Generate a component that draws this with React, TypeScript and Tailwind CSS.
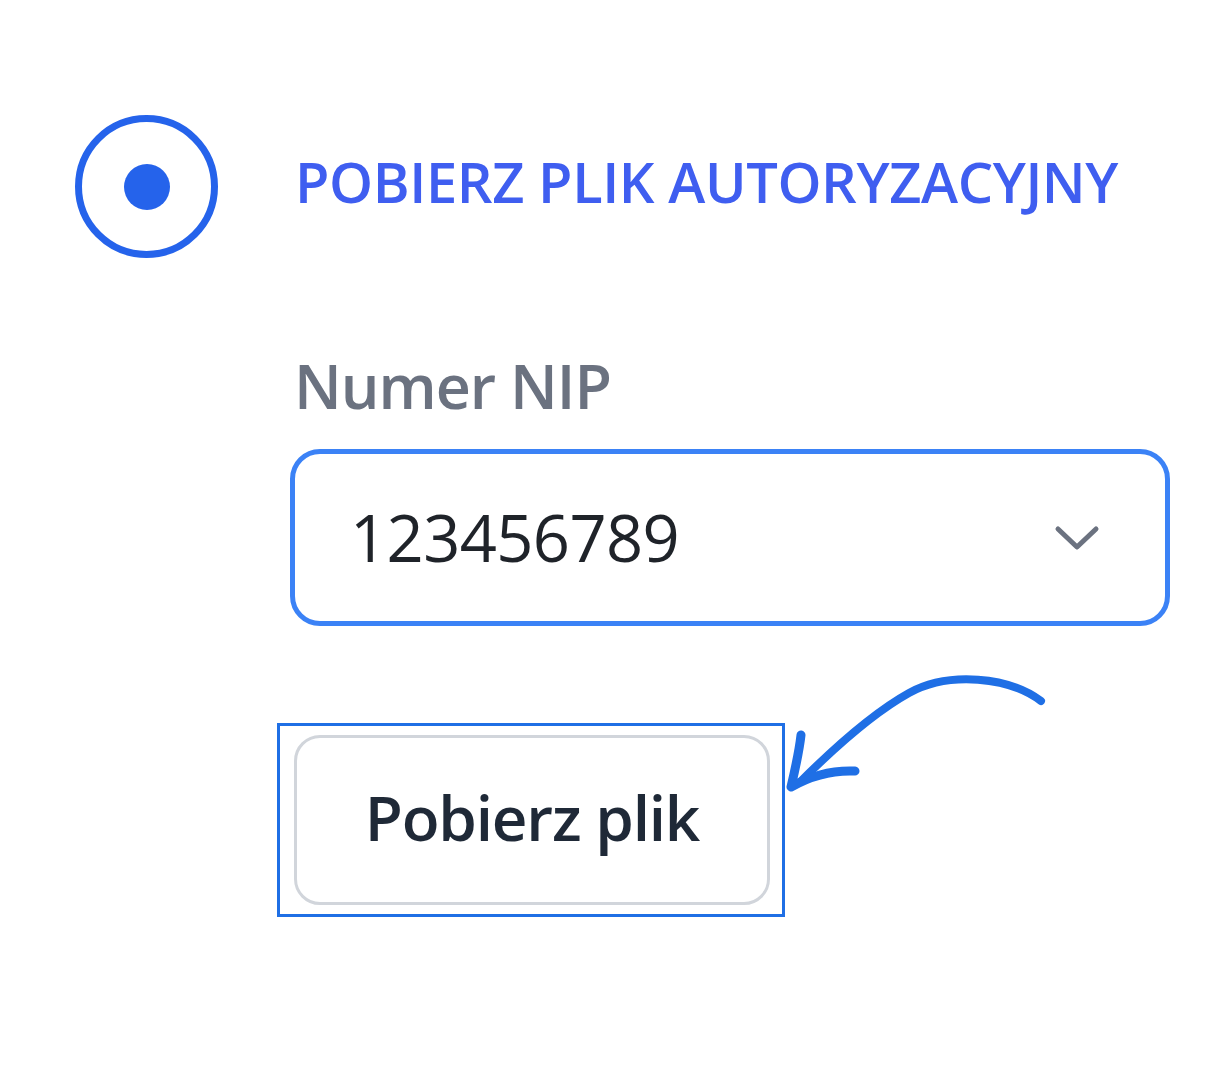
import React from "react";

function CurvedArrow() {
  return (
    <svg
      className="absolute left-[500px] top-[-48px]"
      width="280"
      height="130"
      viewBox="0 0 280 130"
      fill="none"
    >
      {/* hand-drawn arrow pointing at the button */}
      <path
        d="M264 26 C232 2 172 -4 132 18 C96 38 60 70 22 108"
        stroke="#1f6fe5"
        strokeWidth="8"
        strokeLinecap="round"
      />
      <path
        d="M24 60 C22 78 18 95 14 112 C35 100 55 95 78 96"
        stroke="#1f6fe5"
        strokeWidth="9"
        strokeLinecap="round"
        strokeLinejoin="round"
      />
    </svg>
  );
}

export default function App() {
  return (
    <div
      className="relative h-[1080px] w-[1208px] bg-white"
      style={{ fontFamily: '"Open Sans", "Noto Sans", sans-serif' }}
    >
      {/* Radio + heading */}
      <div className="flex items-center pl-[75px] pt-[115px]">
        <div className="flex h-[143px] w-[143px] items-center justify-center rounded-full border-[7px] border-[#2563eb]">
          <div className="h-[46px] w-[46px] rounded-full bg-[#2563eb]" />
        </div>
        <span className="ml-[77px] mb-[12px] text-[56px] font-semibold tracking-[-0.4px] text-[#3f5ef0]">
          POBIERZ PLIK AUTORYZACYJNY
        </span>
      </div>

      <div className="pl-[290px]">
        {/* Label */}
        <div className="mt-[92px] pl-[4px] text-[61px] font-semibold leading-[72px] tracking-[-1px] text-[#6b7280]">
          Numer NIP
        </div>

        {/* Select */}
        <div className="mt-[27px] flex h-[177px] w-[880px] items-center justify-between rounded-[30px] border-[5px] border-[#3b82f6] pl-[55px] pr-[65px]">
          <span className="text-[65px] tracking-[-0.6px] text-[#1f2329]">123456789</span>
          <svg width="46" height="28" viewBox="0 0 46 28" fill="none">
            <path
              d="M4 5 L23 23 L42 5"
              stroke="#6b7280"
              strokeWidth="5"
              strokeLinecap="round"
              strokeLinejoin="round"
            />
          </svg>
        </div>

        {/* Button with highlight */}
        <div className="relative ml-[-13px] mt-[97px] w-[508px]">
          <div className="border-[3px] border-[#1f6fe5] px-[14px] py-[9px]">
            <button className="flex h-[170px] w-[476px] items-center justify-center rounded-[26px] border-[3px] border-[#d1d5db] bg-white">
              <span className="mb-[6px] text-[62px] font-semibold tracking-[-1.2px] text-[#1f2937]">
                Pobierz plik
              </span>
            </button>
          </div>
          <CurvedArrow />
        </div>
      </div>
    </div>
  );
}
